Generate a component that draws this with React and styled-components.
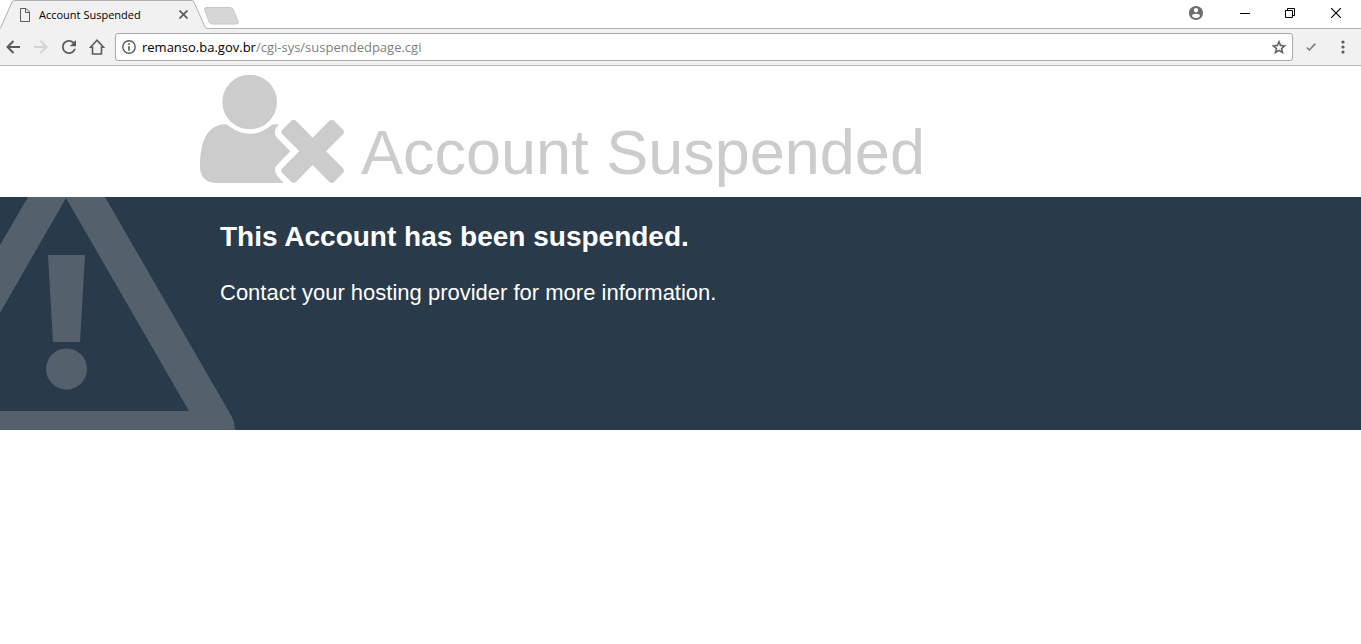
import styled, { createGlobalStyle } from 'styled-components';

const GlobalStyle = createGlobalStyle`
  * {
    box-sizing: border-box;
  }
  body {
    margin: 0;
    background-color: #fff;
    font-family: 'Liberation Sans', Arial, sans-serif;
  }
`;

const TabStrip = styled.div`
  display: flex;
  justify-content: space-between;
  height: 29px;
  border-bottom: 1px solid #b4b4b4;
`;
const Tabs = styled.div`
  display: flex;
`;
const Tab = styled.div`
  display: grid;
  width: 204px;
  height: 29px;
  > * {
    grid-area: 1 / 1;
  }
`;
const TabContent = styled.div`
  display: flex;
  align-items: center;
  padding: 0 18px 0 19px;
  font-family: 'Open Sans', sans-serif;
  font-size: 11px;
  svg {
    flex: none;
  }
`;
const TabTitle = styled.span`
  flex: 1;
  margin-left: 8px;
  white-space: nowrap;
`;
const IconButton = styled.button`
  display: flex;
  align-items: center;
  justify-content: center;
  flex: none;
  width: ${(props) => props.$width || 28}px;
  height: ${(props) => props.$height || 28}px;
  padding: 0;
  border: none;
  background-color: transparent;
`;
const NewTab = styled.button`
  display: flex;
  align-items: flex-start;
  width: 36px;
  padding: 7px 0 0;
  border: none;
  background-color: transparent;
`;
const WindowButtons = styled.div`
  display: flex;
  padding-right: 2px;
`;
const Toolbar = styled.div`
  display: flex;
  align-items: center;
  height: 37px;
  padding-right: 4px;
  background-color: #f1f1f1;
  border-bottom: 1px solid #b4b4b4;
`;
const Nav = styled.nav`
  display: flex;
  margin-right: 4px;
  margin-left: -1px;
`;
const AddressBar = styled.div`
  display: flex;
  align-items: center;
  flex: 1;
  height: 28px;
  padding-left: 6px;
  border: 1px solid #a9a9a9;
  border-radius: 3px;
  background-color: #fff;
`;
const Url = styled.a`
  flex: 1;
  margin-left: 6px;
  font-family: 'Open Sans', sans-serif;
  font-size: 13px;
  color: #808080;
  text-decoration: none;
`;
const Host = styled.span`
  color: #000;
`;

const Header = styled.header`
  display: flex;
  align-items: flex-end;
  height: 131px;
  padding: 0 200px 14px;
`;
const Title = styled.h1`
  margin: 0 0 0 17px;
  font-size: 63px;
  font-weight: 400;
  line-height: 62px;
  color: #ccc;
  white-space: nowrap;
`;
const Band = styled.main`
  display: grid;
  min-height: 233px;
  overflow: hidden;
  background-color: #293a4a;
  > * {
    grid-area: 1 / 1;
  }
`;
const Message = styled.section`
  padding: 23px 220px;
  color: #fff;
`;
const Heading = styled.h2`
  margin: 0 0 24px;
  font-size: 28px;
  line-height: 34px;
`;
const Text = styled.p`
  margin: 0;
  font-size: 22px;
  line-height: 30px;
`;

const UserTimes = () => (
  <svg width="144" height="108" viewBox="30 27 432 324" fill="#ccc" aria-hidden="true">
    <circle cx="179" cy="108" r="82" />
    <path d="M104 175C112 174 116 180 122 184C156 210 202 210 236 184C244 178 250 174 258 175L267 176C252 188 252 204 260 214L301 256L262 296C252 306 254 320 262 330L281 351H76C48 351 30 331 30 304C30 250 40 178 104 175Z" />
    <path d="M304 164Q311 159 318 164L368 215L418 164Q425 159 432 164L459 191Q465 198 459 205L408 256L459 307Q465 314 459 321L432 348Q425 354 418 348L368 297L318 348Q311 354 304 348L277 321Q270 314 277 307L328 256L277 205Q270 198 277 191Z" />
  </svg>
);

const Warning = () => (
  <svg width="236" height="233" viewBox="0 0 236 233" fill="#54616d" aria-hidden="true">
    <path d="M28 0H105L232 220Q235 226 235 233H0V214H189L66 1L0 116V48Z" />
    <path d="M48 58H85L80 145H53Z" />
    <circle cx="66.500" cy="172" r="20.500" />
  </svg>
);

const App = () => (
  <>
    <GlobalStyle />
    <TabStrip>
      <Tabs>
        <Tab>
          <svg width="207" height="29" viewBox="0 0 207 29" aria-hidden="true">
            <path d="M0 29L1 27L12 2Q13 .5 15 .5H191Q193 .5 194 2L205 27Q206 28.500 207 28.500V29Z" fill="#f1f1f1" />
            <path d="M0 28.500L1 27L12 2Q13 .5 15 .5H191Q193 .5 194 2L205 27Q206 28.500 207 28.500" fill="none" stroke="#b0b0b0" />
          </svg>
          <TabContent>
            <svg width="12" height="14" viewBox="0 0 12 14" fill="none" stroke="#5a5a5a" aria-hidden="true">
              <path d="M1.500 .5H7L10.500 4V13.500H1.500ZM6.500 .5V4.500H10.500" />
            </svg>
            <TabTitle>Account Suspended</TabTitle>
            <IconButton $width={11} $height={20} aria-label="Close tab">
              <svg width="9" height="9" viewBox="0 0 9 9" stroke="#5a5a5a" strokeWidth="1.700">
                <path d="M.5 .5L8.500 8.500M8.500 .5L.5 8.500" />
              </svg>
            </IconButton>
          </TabContent>
        </Tab>
        <NewTab aria-label="New tab">
          <svg width="36" height="18" viewBox="0 0 36 18">
            <path d="M2 .5H25Q28 .5 29 2L34 14Q35 17 32 17H9Q6 17 5 15L.5 2.500Q0 .5 2 .5Z" fill="#d6d6d6" stroke="#c8c8c8" />
          </svg>
        </NewTab>
      </Tabs>
      <WindowButtons>
        <IconButton $width={54} $height={26} aria-label="Profile">
          <svg width="14" height="14" viewBox="2 2 20 20" fill="#6e6e6e">
            <path d="M12 2C6.480 2 2 6.480 2 12s4.480 10 10 10 10-4.480 10-10S17.520 2 12 2zm0 3c1.660 0 3 1.340 3 3s-1.340 3-3 3-3-1.340-3-3 1.340-3 3-3zm0 14.200c-2.500 0-4.710-1.280-6-3.220.03-1.990 4-3.080 6-3.080 1.990 0 5.970 1.090 6 3.080-1.290 1.940-3.500 3.220-6 3.220z" />
          </svg>
        </IconButton>
        <IconButton $width={44} $height={27} aria-label="Minimize">
          <svg width="10" height="11" viewBox="0 0 10 11" stroke="#000">
            <path d="M0 5.500H10" />
          </svg>
        </IconButton>
        <IconButton $width={46} $height={26} aria-label="Restore">
          <svg width="10" height="10" viewBox="0 0 10 10" fill="none" stroke="#000">
            <path d="M.5 2.500H7.500V9.500H.5ZM2.500 2.500V.5H9.500V7.500H7.500" />
          </svg>
        </IconButton>
        <IconButton $width={46} $height={26} aria-label="Close">
          <svg width="10" height="10" viewBox="0 0 10 10" stroke="#000" strokeWidth="1.200">
            <path d="M0 0L10 10M10 0L0 10" />
          </svg>
        </IconButton>
      </WindowButtons>
    </TabStrip>
    <Toolbar>
      <Nav>
        <IconButton aria-label="Back">
          <svg width="14" height="14" viewBox="0 0 14 14" fill="none" stroke="#5a5a5a" strokeWidth="2">
            <path d="M14 7H1.500M7.500 1L1.500 7L7.500 13" />
          </svg>
        </IconButton>
        <IconButton aria-label="Forward">
          <svg width="14" height="14" viewBox="0 0 14 14" fill="none" stroke="#d3d3d3" strokeWidth="2">
            <path d="M0 7H12.500M6.500 1L12.500 7L6.500 13" />
          </svg>
        </IconButton>
        <IconButton aria-label="Reload">
          <svg width="14" height="14" viewBox="4 4 16 16" fill="#5a5a5a">
            <path d="M17.650 6.350C16.200 4.900 14.210 4 12 4c-4.420 0-7.990 3.580-7.990 8s3.570 8 7.990 8c3.730 0 6.840-2.550 7.730-6h-2.080c-.82 2.330-3.040 4-5.650 4-3.310 0-6-2.690-6-6s2.690-6 6-6c1.660 0 3.140.69 4.220 1.780L13 11h7V4l-2.350 2.350z" />
          </svg>
        </IconButton>
        <IconButton aria-label="Home">
          <svg width="16" height="16" viewBox="0 0 16 16" fill="none" stroke="#5a5a5a" strokeWidth="1.600">
            <path d="M8 1.200L1.500 8.200H3.500V15H12.500V8.200H14.500Z" />
          </svg>
        </IconButton>
      </Nav>
      <AddressBar>
        <svg width="14" height="14" viewBox="0 0 14 14" aria-hidden="true">
          <circle cx="7" cy="7" r="6.200" fill="none" stroke="#5a5a5a" strokeWidth="1.400" />
          <path d="M6.200 3.300H7.800V4.900H6.200ZM6.200 6H7.800V10.700H6.200Z" fill="#5a5a5a" />
        </svg>
        <Url href="#">
          <Host>remanso.ba.gov.br</Host>/cgi-sys/suspendedpage.cgi
        </Url>
        <IconButton $width={26} $height={26} aria-label="Bookmark this page">
          <svg width="14" height="14" viewBox="2 2 20 19" fill="#5a5a5a" stroke="#5a5a5a" strokeWidth=".6">
            <path d="M22 9.240l-7.190-.62L12 2 9.190 8.630 2 9.240l5.460 4.730L5.820 21 12 17.270 18.180 21l-1.630-7.030L22 9.240zM12 15.400l-3.760 2.270 1-4.280-3.320-2.880 4.380-.38L12 6.100l1.710 4.040 4.380.38-3.320 2.880 1 4.280L12 15.400z" />
          </svg>
        </IconButton>
      </AddressBar>
      <IconButton $width={36} aria-label="Extension">
        <svg width="10" height="8" viewBox="0 0 10 8" fill="none" stroke="#7d7d7d" strokeWidth="1.600">
          <path d="M.8 4.500L3.300 7L9.300 .6" />
        </svg>
      </IconButton>
      <IconButton aria-label="Menu">
        <svg width="4" height="14" viewBox="0 0 4 14" fill="#5a5a5a">
          <circle cx="2" cy="2" r="1.600" />
          <circle cx="2" cy="7" r="1.600" />
          <circle cx="2" cy="12" r="1.600" />
        </svg>
      </IconButton>
    </Toolbar>
    <Header>
      <UserTimes />
      <Title>Account Suspended</Title>
    </Header>
    <Band>
      <Warning />
      <Message>
        <Heading>This Account has been suspended.</Heading>
        <Text>Contact your hosting provider for more information.</Text>
      </Message>
    </Band>
  </>
);

export default App;
